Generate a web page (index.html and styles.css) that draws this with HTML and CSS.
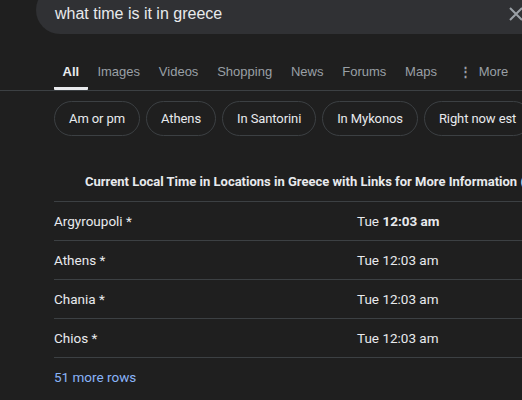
FILE: index.html
```html
<!DOCTYPE html>
<html>
<head>
<meta charset="utf-8">
<link rel="stylesheet" href="styles.css">
</head>
<body>
<div class="search">
  <span class="query">what time is it in greece</span>
  <svg class="clear" width="16" height="16" viewBox="0 0 16 16"><path d="M2 2 L14 14 M14 2 L2 14" stroke="#9aa0a6" stroke-width="2" fill="none"/></svg>
</div>
<nav class="tabs">
  <span class="tab active">All</span>
  <span class="tab">Images</span>
  <span class="tab">Videos</span>
  <span class="tab">Shopping</span>
  <span class="tab">News</span>
  <span class="tab">Forums</span>
  <span class="tab">Maps</span>
  <span class="tab more"><span class="dots">&#8942;</span>More</span>
</nav>
<div class="chips">
  <span class="chip">Am or pm</span>
  <span class="chip">Athens</span>
  <span class="chip">In Santorini</span>
  <span class="chip">In Mykonos</span>
  <span class="chip">Right now est</span>
</div>
<div class="table">
  <div class="caption">Current Local Time in Locations in Greece with Links for More Information (</div>
  <div class="row"><span class="city">Argyroupoli *</span><span class="time">Tue <b>12:03 am</b></span></div>
  <div class="row"><span class="city">Athens *</span><span class="time">Tue 12:03 am</span></div>
  <div class="row"><span class="city">Chania *</span><span class="time">Tue 12:03 am</span></div>
  <div class="row"><span class="city">Chios *</span><span class="time">Tue 12:03 am</span></div>
  <div class="more-rows">51 more rows</div>
</div>
</body>
</html>
```
FILE: styles.css
```css
html, body {
  margin: 0;
  padding: 0;
  background: #1f1f1f;
  overflow: hidden;
  width: 522px;
  height: 400px;
}
body {
  font-family: Roboto, "Liberation Sans", Arial, sans-serif;
  color: #e8eaed;
}
.search {
  margin-top: -14px;
  margin-left: 36px;
  height: 48px;
  width: 520px;
  background: #303134;
  border-radius: 24px;
  display: flex;
  align-items: center;
  padding-top: 7px;
  box-sizing: border-box;
}
.query {
  font-family: "Liberation Sans", Arial, sans-serif;
  font-size: 16px;
  color: #e8eaed;
  margin-left: 19px;
  flex: 1;
}
.clear {
  margin-right: 32px;
}
.tabs {
  margin-top: 24px;
  display: flex;
  padding-left: 54px;
  gap: 0.8px;
  height: 32px;
  border-bottom: 1px solid #3c4043;
  font-family: "Liberation Sans", Arial, sans-serif;
  font-size: 13px;
  white-space: nowrap;
}
.tab {
  padding: 0 9px;
  color: #9aa0a6;
  line-height: 28px;
  height: 32px;
  box-sizing: border-box;
}
.tab.active {
  color: #e8eaed;
  font-weight: bold;
  border-bottom: 3px solid #e8eaed;
  border-radius: 1px;
  padding: 0 8.5px;
}
.more {
  margin-left: 3px;
}
.dots {
  margin-right: 7px;
  font-weight: bold;
}
.chips {
  display: flex;
  gap: 6px;
  padding-left: 54px;
  margin-top: 10px;
  white-space: nowrap;
}
.chip {
  flex: none;
  height: 35px;
  box-sizing: border-box;
  border: 1px solid #3c4043;
  border-radius: 18px;
  padding: 0 14px;
  line-height: 33px;
  font-size: 13px;
  letter-spacing: -0.1px;
  color: #e8eaed;
}
.table {
  margin-top: 28px;
  padding-left: 54px;
  font-size: 13.5px;
  white-space: nowrap;
}
.caption {
  font-weight: bold;
  font-size: 13px;
  padding-left: 31px;
  padding-top: 8px;
  height: 38px;
  box-sizing: border-box;
  line-height: 20px;
  border-bottom: 1px solid #3c4043;
  color: #e8eaed;
}
.row {
  display: flex;
  height: 39px;
  box-sizing: border-box;
  align-items: center;
  border-bottom: 1px solid #3c4043;
}
.city {
  width: 303px;
}
.time b {
  font-weight: bold;
}
.more-rows {
  color: #8ab4f8;
  height: 38px;
  line-height: 38px;
}
```
